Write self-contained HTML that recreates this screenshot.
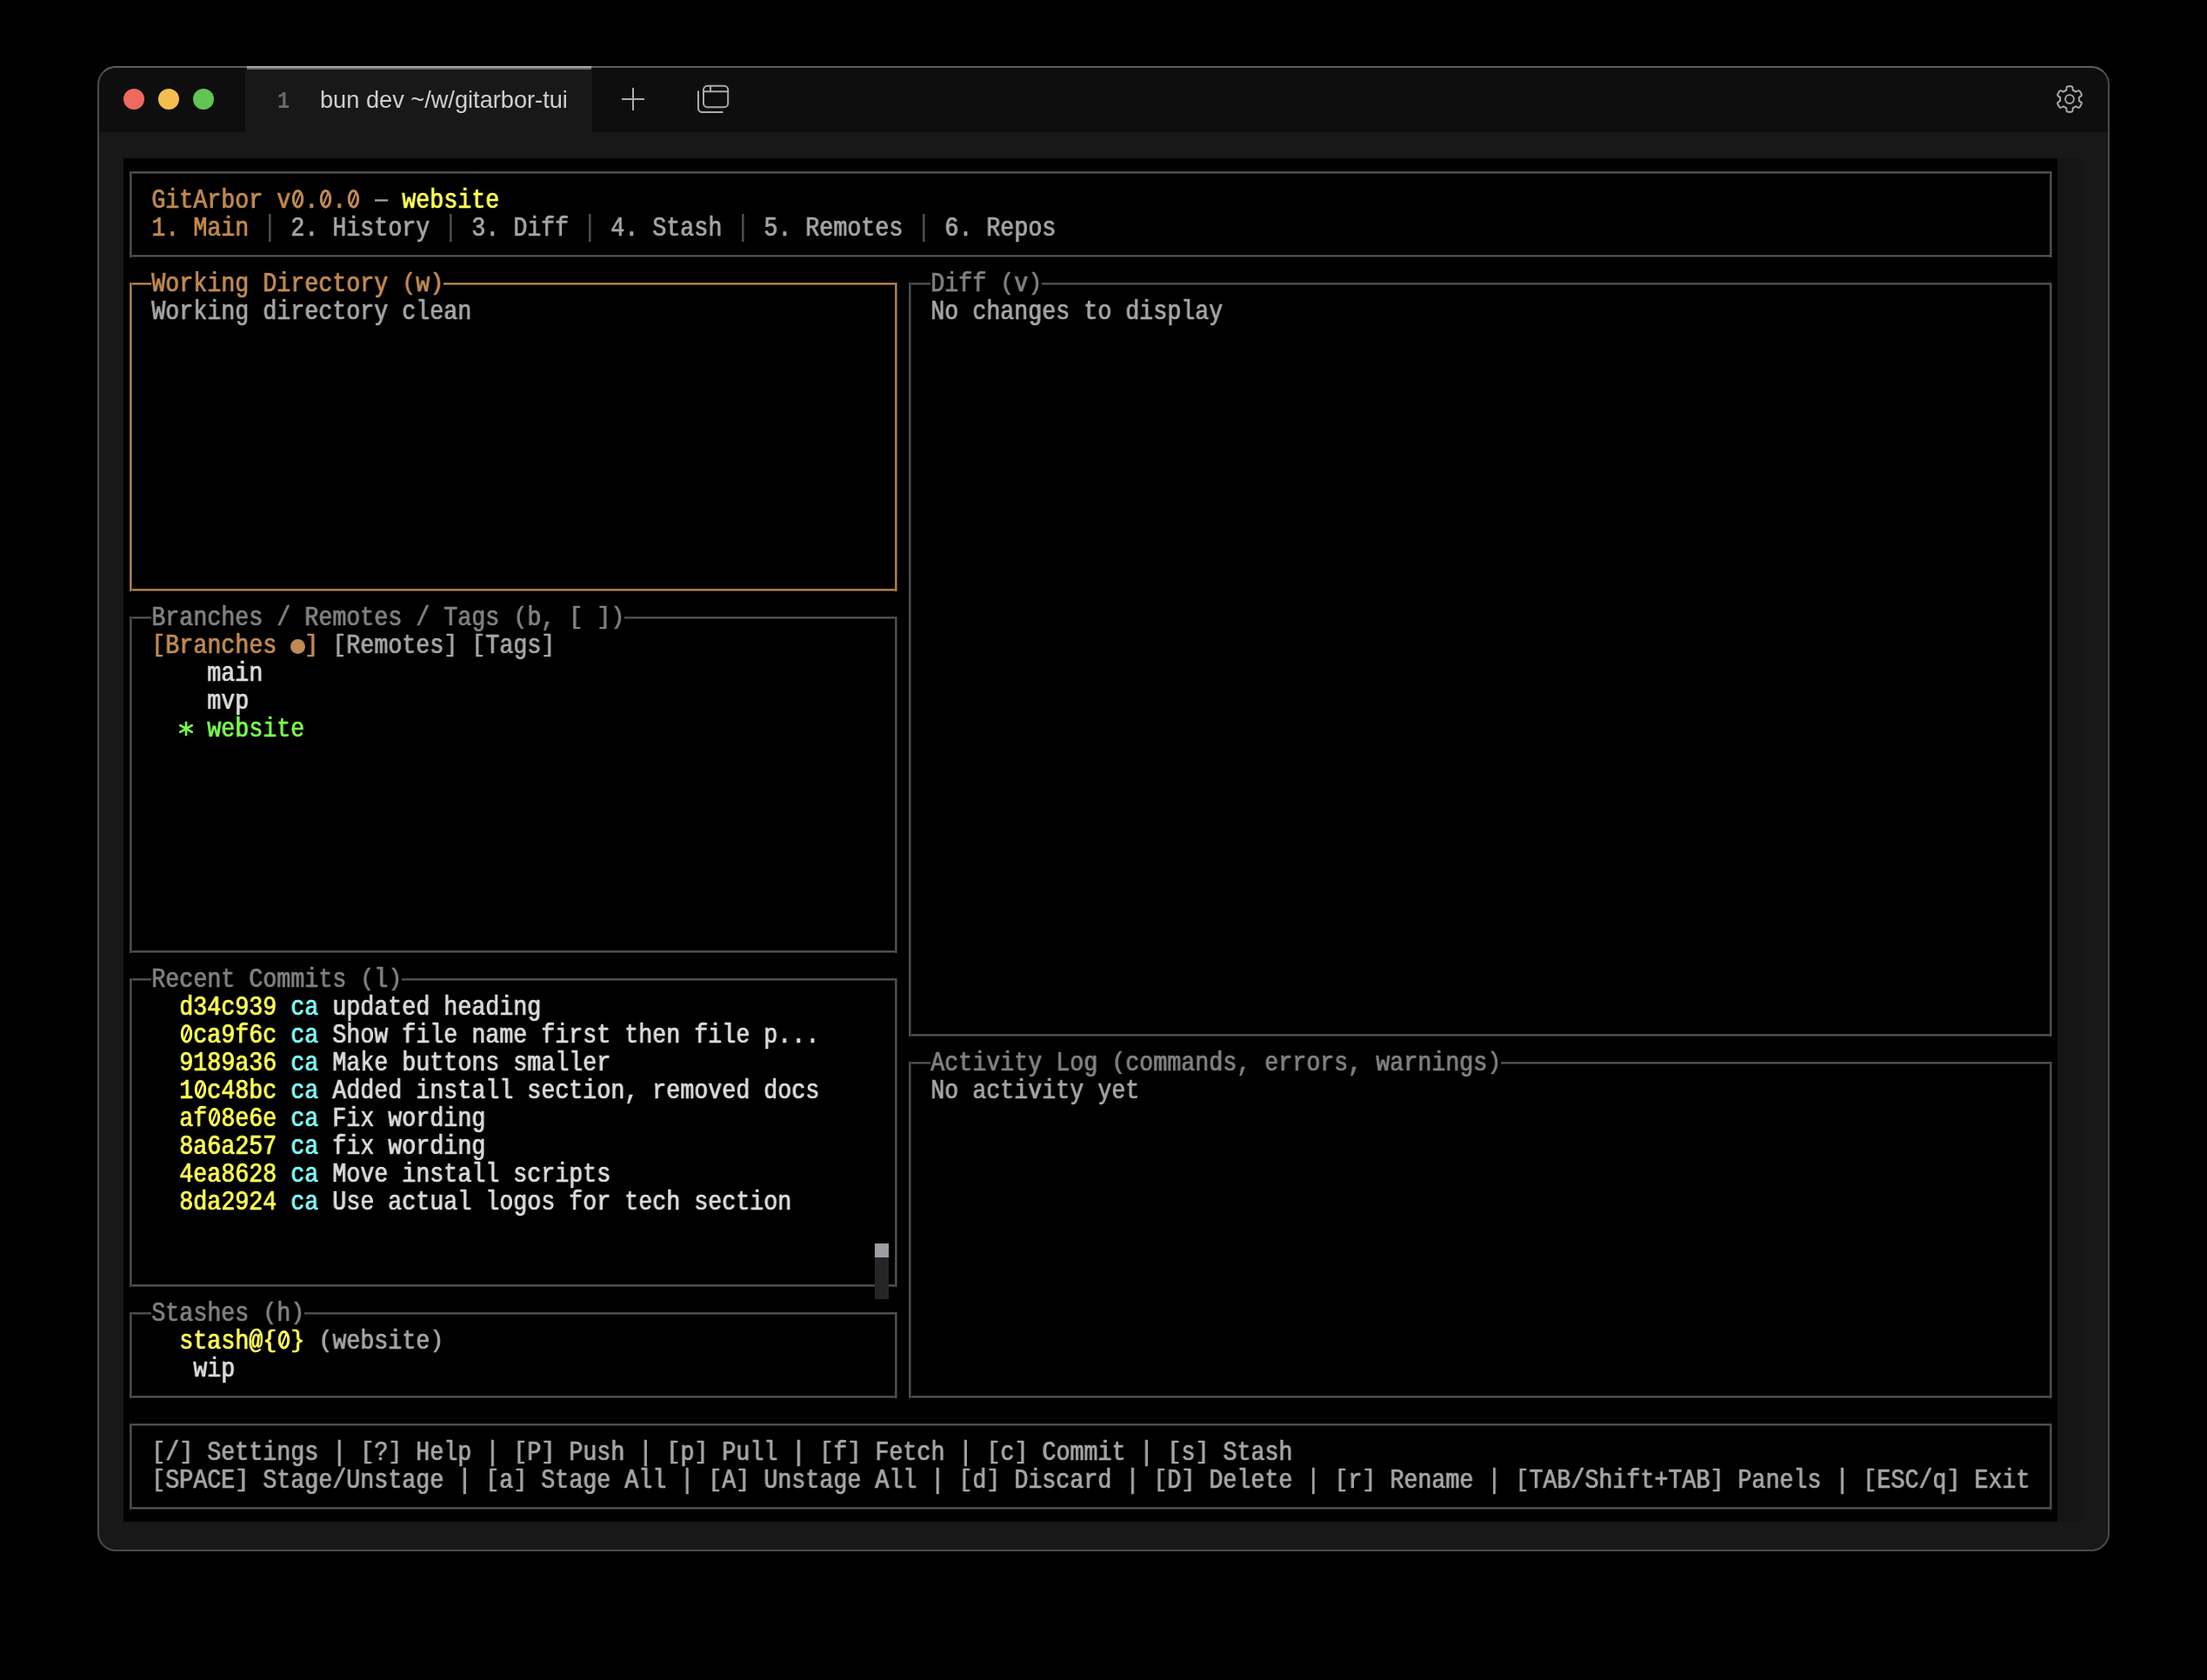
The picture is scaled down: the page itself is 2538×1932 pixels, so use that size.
<!DOCTYPE html>
<html><head><meta charset="utf-8"><style>
html,body{margin:0;padding:0;background:#000;width:2538px;height:1932px;overflow:hidden;position:relative}
.a{position:absolute}
#win{left:112px;top:76px;width:2314px;height:1708px;border-radius:21px;background:#181818;overflow:hidden}
#tbar{left:0;top:0;width:2314px;height:76px;background:#0e0e0e}
#tab{left:170px;top:0;width:399px;height:76px;background:#181818}
#wborder{left:112px;top:76px;width:2310px;height:1704px;border:2px solid #4a4a4a;border-top-color:#5e5e5e;border-radius:21px}
.dot{top:26px;width:24px;height:24px;border-radius:50%}
#tabt{left:368px;top:77px;height:76px;line-height:76px;font-family:"Liberation Sans",sans-serif;font-size:27.2px;color:#cfcfcf;white-space:pre}
#tabn{left:319px;top:79px;height:76px;line-height:76px;font-family:"Liberation Mono",monospace;font-weight:bold;font-size:27px;color:#6a6a6a;transform:scaleX(0.87);transform-origin:0 0}
#term{left:142px;top:182px;width:2224px;height:1568px;background:#000}
.r{position:absolute;height:32px;line-height:32px;white-space:pre;font-family:"Liberation Mono",monospace;font-size:30.5px;transform:scaleX(0.87417);transform-origin:0 0;-webkit-text-stroke:0.3px currentColor;text-shadow:0.8px 0;will-change:transform}
.b{position:absolute}
.p{display:inline-block;transform:scaleY(0.89);transform-origin:50% 3px}
</style></head><body>
<div id="win" class="a">
 <div id="tbar" class="a">
  <div class="a dot" style="left:30px;background:#ed6a5e"></div>
  <div class="a dot" style="left:70px;background:#f4be4f"></div>
  <div class="a dot" style="left:110px;background:#61c554"></div>
  <div id="tab" class="a"></div>
 </div>
 <div class="a" style="left:2254px;top:106px;width:30px;height:1568px;background:#151515"></div>
</div>
<div id="term" class="a">
<div class="b" style="left:7px;top:15px;width:2211px;height:3px;background:linear-gradient(#444444 0 1px,#555555 1px 2px,#2a2a2a 2px)"></div>
<div class="b" style="left:7px;top:111px;width:2211px;height:3px;background:linear-gradient(#444444 0 1px,#555555 1px 2px,#2a2a2a 2px)"></div>
<div class="b" style="left:7px;top:15px;width:3px;height:99px;background:linear-gradient(90deg,#444444 0 1px,#555555 1px 2px,#2a2a2a 2px)"></div>
<div class="b" style="left:2215px;top:15px;width:3px;height:99px;background:linear-gradient(90deg,#444444 0 1px,#555555 1px 2px,#2a2a2a 2px)"></div>
<div class="r" style="left:32px;top:32.88px"><span style="color:#c08a52">GitArbor v . . </span><span style="color:#a5a5a5">   </span><span style="color:#ffff55">website</span></div>
<div class="b" style="left:289px;top:47px;width:15px;height:3px;background:linear-gradient(#767676 0 1px,#a5a5a5 1px 2px,#5a5a5a 2px)"></div>
<div class="b" style="left:167px;top:64px;width:3px;height:32px;background:linear-gradient(90deg,#444444 0 1px,#555555 1px 2px,#2a2a2a 2px)"></div>
<div class="b" style="left:375px;top:64px;width:3px;height:32px;background:linear-gradient(90deg,#444444 0 1px,#555555 1px 2px,#2a2a2a 2px)"></div>
<div class="b" style="left:535px;top:64px;width:3px;height:32px;background:linear-gradient(90deg,#444444 0 1px,#555555 1px 2px,#2a2a2a 2px)"></div>
<div class="b" style="left:711px;top:64px;width:3px;height:32px;background:linear-gradient(90deg,#444444 0 1px,#555555 1px 2px,#2a2a2a 2px)"></div>
<div class="b" style="left:919px;top:64px;width:3px;height:32px;background:linear-gradient(90deg,#444444 0 1px,#555555 1px 2px,#2a2a2a 2px)"></div>
<div class="r" style="left:32px;top:64.88px"><span style="color:#c08a52">1. Main</span><span style="color:#a5a5a5">   </span><span style="color:#a5a5a5">2. History</span><span style="color:#a5a5a5">   </span><span style="color:#a5a5a5">3. Diff</span><span style="color:#a5a5a5">   </span><span style="color:#a5a5a5">4. Stash</span><span style="color:#a5a5a5">   </span><span style="color:#a5a5a5">5. Remotes</span><span style="color:#a5a5a5">   </span><span style="color:#a5a5a5">6. Repos</span></div>
<div class="b" style="left:7px;top:143px;width:25px;height:3px;background:linear-gradient(#9a6e42 0 1px,#c08a52 1px 2px,#5e4428 2px)"></div>
<div class="b" style="left:368px;top:143px;width:522px;height:3px;background:linear-gradient(#9a6e42 0 1px,#c08a52 1px 2px,#5e4428 2px)"></div>
<div class="r" style="left:32px;top:128.88px"><span style="color:#c08a52">Working Directory <span class="p">(</span>w<span class="p">)</span></span></div>
<div class="b" style="left:7px;top:495px;width:883px;height:3px;background:linear-gradient(#9a6e42 0 1px,#c08a52 1px 2px,#5e4428 2px)"></div>
<div class="b" style="left:7px;top:143px;width:3px;height:355px;background:linear-gradient(90deg,#9a6e42 0 1px,#c08a52 1px 2px,#5e4428 2px)"></div>
<div class="b" style="left:887px;top:143px;width:3px;height:355px;background:linear-gradient(90deg,#9a6e42 0 1px,#c08a52 1px 2px,#5e4428 2px)"></div>
<div class="r" style="left:32px;top:160.88px"><span style="color:#a5a5a5">Working directory clean</span></div>
<div class="b" style="left:7px;top:527px;width:25px;height:3px;background:linear-gradient(#444444 0 1px,#555555 1px 2px,#2a2a2a 2px)"></div>
<div class="b" style="left:576px;top:527px;width:314px;height:3px;background:linear-gradient(#444444 0 1px,#555555 1px 2px,#2a2a2a 2px)"></div>
<div class="r" style="left:32px;top:512.88px"><span style="color:#808080">Branches / Remotes / Tags <span class="p">(</span>b, <span class="p">[</span> <span class="p">]</span><span class="p">)</span></span></div>
<div class="b" style="left:7px;top:911px;width:883px;height:3px;background:linear-gradient(#444444 0 1px,#555555 1px 2px,#2a2a2a 2px)"></div>
<div class="b" style="left:7px;top:527px;width:3px;height:387px;background:linear-gradient(90deg,#444444 0 1px,#555555 1px 2px,#2a2a2a 2px)"></div>
<div class="b" style="left:887px;top:527px;width:3px;height:387px;background:linear-gradient(90deg,#444444 0 1px,#555555 1px 2px,#2a2a2a 2px)"></div>
<div class="r" style="left:32px;top:544.88px"><span style="color:#c08a52"><span class="p">[</span>Branches  <span class="p">]</span></span><span style="color:#a5a5a5"> <span class="p">[</span>Remotes<span class="p">]</span> <span class="p">[</span>Tags<span class="p">]</span></span></div>
<div class="b" style="left:192px;top:553px;width:17px;height:17px;border-radius:50%;background:#c08a52"></div>
<div class="r" style="left:96px;top:576.88px"><span style="color:#dadada">main</span></div>
<div class="r" style="left:96px;top:608.88px"><span style="color:#dadada">mvp</span></div>
<div class="r" style="left:96px;top:640.88px"><span style="color:#7afa50">website</span></div>
<svg class="b" style="left:56px;top:640px" width="32" height="32" viewBox="0 0 32 32" stroke="#7afa50" stroke-width="2.6"><path d="M16 7.8V24.2M8.3 11.6L23.7 20.4M8.3 20.4L23.7 11.6"/></svg>
<div class="b" style="left:7px;top:943px;width:25px;height:3px;background:linear-gradient(#444444 0 1px,#555555 1px 2px,#2a2a2a 2px)"></div>
<div class="b" style="left:320px;top:943px;width:570px;height:3px;background:linear-gradient(#444444 0 1px,#555555 1px 2px,#2a2a2a 2px)"></div>
<div class="r" style="left:32px;top:928.88px"><span style="color:#808080">Recent Commits <span class="p">(</span>l<span class="p">)</span></span></div>
<div class="b" style="left:7px;top:1295px;width:883px;height:3px;background:linear-gradient(#444444 0 1px,#555555 1px 2px,#2a2a2a 2px)"></div>
<div class="b" style="left:7px;top:943px;width:3px;height:355px;background:linear-gradient(90deg,#444444 0 1px,#555555 1px 2px,#2a2a2a 2px)"></div>
<div class="b" style="left:887px;top:943px;width:3px;height:355px;background:linear-gradient(90deg,#444444 0 1px,#555555 1px 2px,#2a2a2a 2px)"></div>
<div class="r" style="left:64px;top:960.88px"><span style="color:#ffff55">d34c939</span><span style="color:#dadada"> </span><span style="color:#7cfcf8">ca</span><span style="color:#dadada"> updated heading</span></div>
<div class="r" style="left:64px;top:992.88px"><span style="color:#ffff55"> ca9f6c</span><span style="color:#dadada"> </span><span style="color:#7cfcf8">ca</span><span style="color:#dadada"> Show file name first then file p...</span></div>
<div class="r" style="left:64px;top:1024.88px"><span style="color:#ffff55">9189a36</span><span style="color:#dadada"> </span><span style="color:#7cfcf8">ca</span><span style="color:#dadada"> Make buttons smaller</span></div>
<div class="r" style="left:64px;top:1056.88px"><span style="color:#ffff55">1 c48bc</span><span style="color:#dadada"> </span><span style="color:#7cfcf8">ca</span><span style="color:#dadada"> Added install section, removed docs</span></div>
<div class="r" style="left:64px;top:1088.88px"><span style="color:#ffff55">af 8e6e</span><span style="color:#dadada"> </span><span style="color:#7cfcf8">ca</span><span style="color:#dadada"> Fix wording</span></div>
<div class="r" style="left:64px;top:1120.88px"><span style="color:#ffff55">8a6a257</span><span style="color:#dadada"> </span><span style="color:#7cfcf8">ca</span><span style="color:#dadada"> fix wording</span></div>
<div class="r" style="left:64px;top:1152.88px"><span style="color:#ffff55">4ea8628</span><span style="color:#dadada"> </span><span style="color:#7cfcf8">ca</span><span style="color:#dadada"> Move install scripts</span></div>
<div class="r" style="left:64px;top:1184.88px"><span style="color:#ffff55">8da2924</span><span style="color:#dadada"> </span><span style="color:#7cfcf8">ca</span><span style="color:#dadada"> Use actual logos for tech section</span></div>
<div class="b" style="left:864px;top:1248px;width:16px;height:16px;background:#9c9ea3"></div>
<div class="b" style="left:864px;top:1264px;width:16px;height:48px;background:#262628"></div>
<div class="b" style="left:7px;top:1327px;width:25px;height:3px;background:linear-gradient(#444444 0 1px,#555555 1px 2px,#2a2a2a 2px)"></div>
<div class="b" style="left:208px;top:1327px;width:682px;height:3px;background:linear-gradient(#444444 0 1px,#555555 1px 2px,#2a2a2a 2px)"></div>
<div class="r" style="left:32px;top:1312.88px"><span style="color:#808080">Stashes <span class="p">(</span>h<span class="p">)</span></span></div>
<div class="b" style="left:7px;top:1423px;width:883px;height:3px;background:linear-gradient(#444444 0 1px,#555555 1px 2px,#2a2a2a 2px)"></div>
<div class="b" style="left:7px;top:1327px;width:3px;height:99px;background:linear-gradient(90deg,#444444 0 1px,#555555 1px 2px,#2a2a2a 2px)"></div>
<div class="b" style="left:887px;top:1327px;width:3px;height:99px;background:linear-gradient(90deg,#444444 0 1px,#555555 1px 2px,#2a2a2a 2px)"></div>
<div class="r" style="left:64px;top:1344.88px"><span style="color:#ffff55">stash@<span class="p">{</span> <span class="p">}</span></span><span style="color:#a5a5a5"> <span class="p">(</span>website<span class="p">)</span></span></div>
<div class="r" style="left:80px;top:1376.88px"><span style="color:#dadada">wip</span></div>
<div class="b" style="left:903px;top:143px;width:25px;height:3px;background:linear-gradient(#444444 0 1px,#555555 1px 2px,#2a2a2a 2px)"></div>
<div class="b" style="left:1056px;top:143px;width:1162px;height:3px;background:linear-gradient(#444444 0 1px,#555555 1px 2px,#2a2a2a 2px)"></div>
<div class="r" style="left:928px;top:128.88px"><span style="color:#808080">Diff <span class="p">(</span>v<span class="p">)</span></span></div>
<div class="b" style="left:903px;top:1007px;width:1315px;height:3px;background:linear-gradient(#444444 0 1px,#555555 1px 2px,#2a2a2a 2px)"></div>
<div class="b" style="left:903px;top:143px;width:3px;height:867px;background:linear-gradient(90deg,#444444 0 1px,#555555 1px 2px,#2a2a2a 2px)"></div>
<div class="b" style="left:2215px;top:143px;width:3px;height:867px;background:linear-gradient(90deg,#444444 0 1px,#555555 1px 2px,#2a2a2a 2px)"></div>
<div class="r" style="left:928px;top:160.88px"><span style="color:#a5a5a5">No changes to display</span></div>
<div class="b" style="left:903px;top:1039px;width:25px;height:3px;background:linear-gradient(#444444 0 1px,#555555 1px 2px,#2a2a2a 2px)"></div>
<div class="b" style="left:1584px;top:1039px;width:634px;height:3px;background:linear-gradient(#444444 0 1px,#555555 1px 2px,#2a2a2a 2px)"></div>
<div class="r" style="left:928px;top:1024.88px"><span style="color:#808080">Activity Log <span class="p">(</span>commands, errors, warnings<span class="p">)</span></span></div>
<div class="b" style="left:903px;top:1423px;width:1315px;height:3px;background:linear-gradient(#444444 0 1px,#555555 1px 2px,#2a2a2a 2px)"></div>
<div class="b" style="left:903px;top:1039px;width:3px;height:387px;background:linear-gradient(90deg,#444444 0 1px,#555555 1px 2px,#2a2a2a 2px)"></div>
<div class="b" style="left:2215px;top:1039px;width:3px;height:387px;background:linear-gradient(90deg,#444444 0 1px,#555555 1px 2px,#2a2a2a 2px)"></div>
<div class="r" style="left:928px;top:1056.88px"><span style="color:#a5a5a5">No activity yet</span></div>
<div class="b" style="left:7px;top:1455px;width:2211px;height:3px;background:linear-gradient(#444444 0 1px,#555555 1px 2px,#2a2a2a 2px)"></div>
<div class="b" style="left:7px;top:1551px;width:2211px;height:3px;background:linear-gradient(#444444 0 1px,#555555 1px 2px,#2a2a2a 2px)"></div>
<div class="b" style="left:7px;top:1455px;width:3px;height:99px;background:linear-gradient(90deg,#444444 0 1px,#555555 1px 2px,#2a2a2a 2px)"></div>
<div class="b" style="left:2215px;top:1455px;width:3px;height:99px;background:linear-gradient(90deg,#444444 0 1px,#555555 1px 2px,#2a2a2a 2px)"></div>
<div class="r" style="left:32px;top:1472.88px"><span style="color:#a5a5a5"><span class="p">[</span>/<span class="p">]</span> Settings | <span class="p">[</span>?<span class="p">]</span> Help | <span class="p">[</span>P<span class="p">]</span> Push | <span class="p">[</span>p<span class="p">]</span> Pull | <span class="p">[</span>f<span class="p">]</span> Fetch | <span class="p">[</span>c<span class="p">]</span> Commit | <span class="p">[</span>s<span class="p">]</span> Stash</span></div>
<div class="r" style="left:32px;top:1504.88px"><span style="color:#a5a5a5"><span class="p">[</span>SPACE<span class="p">]</span> Stage/Unstage | <span class="p">[</span>a<span class="p">]</span> Stage All | <span class="p">[</span>A<span class="p">]</span> Unstage All | <span class="p">[</span>d<span class="p">]</span> Discard | <span class="p">[</span>D<span class="p">]</span> Delete | <span class="p">[</span>r<span class="p">]</span> Rename | <span class="p">[</span>TAB/Shift+TAB<span class="p">]</span> Panels | <span class="p">[</span>ESC/q<span class="p">]</span> Exit</span></div>
<svg class="b" style="left:192px;top:32px" width="16" height="32" viewBox="0 0 16 32" fill="none" stroke="#c08a52"><ellipse cx="8.5" cy="14.7" rx="5.2" ry="9.2" stroke-width="3"/><path d="M5.6 21.8L11.4 7.6" stroke-width="2.2"/></svg>
<svg class="b" style="left:224px;top:32px" width="16" height="32" viewBox="0 0 16 32" fill="none" stroke="#c08a52"><ellipse cx="8.5" cy="14.7" rx="5.2" ry="9.2" stroke-width="3"/><path d="M5.6 21.8L11.4 7.6" stroke-width="2.2"/></svg>
<svg class="b" style="left:256px;top:32px" width="16" height="32" viewBox="0 0 16 32" fill="none" stroke="#c08a52"><ellipse cx="8.5" cy="14.7" rx="5.2" ry="9.2" stroke-width="3"/><path d="M5.6 21.8L11.4 7.6" stroke-width="2.2"/></svg>
<svg class="b" style="left:64px;top:992px" width="16" height="32" viewBox="0 0 16 32" fill="none" stroke="#ffff55"><ellipse cx="8.5" cy="14.7" rx="5.2" ry="9.2" stroke-width="3"/><path d="M5.6 21.8L11.4 7.6" stroke-width="2.2"/></svg>
<svg class="b" style="left:80px;top:1056px" width="16" height="32" viewBox="0 0 16 32" fill="none" stroke="#ffff55"><ellipse cx="8.5" cy="14.7" rx="5.2" ry="9.2" stroke-width="3"/><path d="M5.6 21.8L11.4 7.6" stroke-width="2.2"/></svg>
<svg class="b" style="left:96px;top:1088px" width="16" height="32" viewBox="0 0 16 32" fill="none" stroke="#ffff55"><ellipse cx="8.5" cy="14.7" rx="5.2" ry="9.2" stroke-width="3"/><path d="M5.6 21.8L11.4 7.6" stroke-width="2.2"/></svg>
<svg class="b" style="left:176px;top:1344px" width="16" height="32" viewBox="0 0 16 32" fill="none" stroke="#ffff55"><ellipse cx="8.5" cy="14.7" rx="5.2" ry="9.2" stroke-width="3"/><path d="M5.6 21.8L11.4 7.6" stroke-width="2.2"/></svg>
</div>
<div id="wborder" class="a"></div>
<div class="a" style="left:284px;top:76px;width:396px;height:2px;background:#a8a8a8"></div>
<div class="a" style="left:284px;top:78px;width:396px;height:2px;background:#676767"></div>
<div id="tabn" class="a">1</div>
<div id="tabt" class="a">bun dev ~/w/gitarbor-tui</div>
<svg class="a" style="left:0;top:0" width="2538" height="200" viewBox="0 0 2538 200" fill="none" stroke="#ababab" stroke-width="2">
 <path d="M715 114H741M728 101V127"/>
 <rect x="809" y="98.8" width="28.2" height="24.4" rx="4.5"/>
 <path d="M809 105.2H837.2M817 99V105.2"/>
 <path d="M803 104.5V124.5A4.6 4.6 0 0 0 807.6 129.1H831.5"/>
 <path d="M2376.27 103.76L2376.47 101.08Q2376.60 99.29 2378.40 99.29L2381.60 99.29Q2383.40 99.29 2383.53 101.08L2383.73 103.76A10.90 10.90 0 0 1 2387.01 105.65L2387.01 105.65L2389.42 104.48Q2391.04 103.70 2391.94 105.26L2393.54 108.03Q2394.44 109.59 2392.95 110.60L2390.73 112.11A10.90 10.90 0 0 1 2390.73 115.89L2390.73 115.89L2392.95 117.40Q2394.44 118.41 2393.54 119.97L2391.94 122.74Q2391.04 124.30 2389.42 123.52L2387.01 122.35A10.90 10.90 0 0 1 2383.73 124.24L2383.73 124.24L2383.53 126.92Q2383.40 128.71 2381.60 128.71L2378.40 128.71Q2376.60 128.71 2376.47 126.92L2376.27 124.24A10.90 10.90 0 0 1 2372.99 122.35L2372.99 122.35L2370.58 123.52Q2368.96 124.30 2368.06 122.74L2366.46 119.97Q2365.56 118.41 2367.05 117.40L2369.27 115.89A10.90 10.90 0 0 1 2369.27 112.11L2369.27 112.11L2367.05 110.60Q2365.56 109.59 2366.46 108.03L2368.06 105.26Q2368.96 103.70 2370.58 104.48L2372.99 105.65A10.90 10.90 0 0 1 2376.27 103.76Z" stroke-width="1.9" stroke-linejoin="round"/>
 <circle cx="2380" cy="114" r="4.9" stroke-width="1.9"/>
</svg>
</body></html>
